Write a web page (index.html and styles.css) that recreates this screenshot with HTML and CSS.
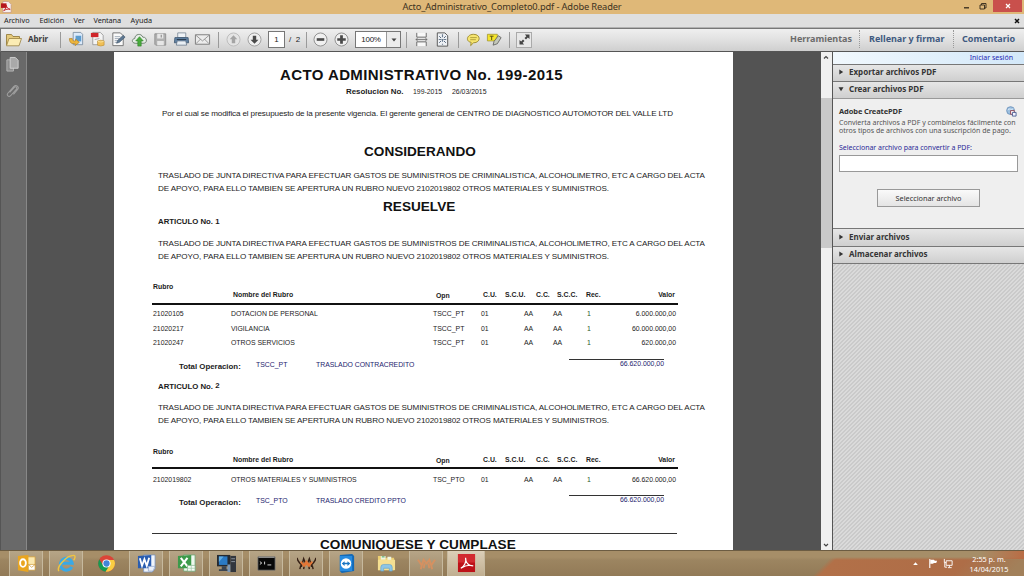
FILE: index.html
```html
<!DOCTYPE html>
<html lang="es">
<head>
<meta charset="utf-8">
<title>Acto_Administrativo_Completo0.pdf - Adobe Reader</title>
<link rel="stylesheet" href="styles.css">
</head>
<body>
<div class="desktop">
  <header class="titlebar">
    <svg class="app-icon" viewBox="0 0 12 12"><path d="M2 0h6l3 3v9H2z" fill="#f6eeee" stroke="#b98a7a" stroke-width=".6"/><path d="M0 2h6v5H0z" fill="#b5161c"/><path d="M3 10c2-2 3-4 2.600-6c1 3 2 4 4.400 4.500c-2-.5-5 0-7 1.500z" fill="none" stroke="#c21c22" stroke-width="1"/></svg>
    <span class="window-title">Acto_Administrativo_Completo0.pdf - Adobe Reader</span>
    <div class="window-buttons">
      <svg class="win-min" viewBox="0 0 8 8"><path d="M1 5.800h5" stroke="#33291a" stroke-width="1.300"/></svg>
      <svg class="win-max" viewBox="0 0 8 8"><path d="M1 3h4.500v4H1zM2.500 3V1.500H7V6H5.500" fill="none" stroke="#33291a" stroke-width=".9"/></svg>
      <span class="win-close"><svg viewBox="0 0 6 6"><path d="M1 1l4 4M5 1L1 5" stroke="#fff" stroke-width="1.200"/></svg></span>
    </div>
  </header>

  <nav class="menubar">
    <span class="m-archivo">Archivo</span><span class="m-edicion">Edición</span><span class="m-ver">Ver</span><span class="m-ventana">Ventana</span><span class="m-ayuda">Ayuda</span>
    <svg class="menu-close" viewBox="0 0 6 6"><path d="M1 1l4 4M5 1L1 5" stroke="#111" stroke-width="1.500"/></svg>
  </nav>

  <div class="toolbar">
    <svg class="folder" viewBox="0 0 18 16"><path d="M1.500 13V2.500h5l1.500 2h6.500v2" fill="#e6cb7c" stroke="#8d7331" stroke-width=".8"/><path d="M1.500 13.800L4 6.500h12.500L14 13.800z" fill="#fbecb4" stroke="#9b8140" stroke-width=".8"/></svg>
    <span class="open-label">Abrir</span>
    <span class="sep sep-12"></span>
    <span class="tool"><svg viewBox="0 0 18 18"><path d="M5.500 1.500h8l2 2v11h-10z" fill="#dceafa" stroke="#6e8296" stroke-width=".8"/><path d="M8 5h6v6H8z" fill="#5c9ccf"/><path d="M1.500 8c0 5 3 6 6 5v2.500L12 12 8 8.500v2C5 11 4.500 9.500 4.500 8z" fill="#eeb63d" stroke="#a87517" stroke-width=".6"/></svg></span>
    <span class="tool"><svg viewBox="0 0 18 18"><path d="M4 1.500h8l3 3v10H4z" fill="#f4f4f4" stroke="#8b8b8b" stroke-width=".8"/><path d="M2 2h8v4.500H2z" fill="#cf252a"/><path d="M6 9l5-1" stroke="#aaa"/><path d="M9 10.500q3.500-1.500 7 0v4.500q-3.500 1.800-7 0z" fill="#f0bf57" stroke="#b58a35" stroke-width=".6"/><path d="M9.500 11q3 1.300 6 0" fill="none" stroke="#fbe39b"/></svg></span>
    <span class="tool"><svg viewBox="0 0 18 18"><path d="M3 2h8l3 3v10.500H3z" fill="#fafafa" stroke="#666" stroke-width=".9"/><path d="M5 6h6M5 8h5M5 10h3M5 12h3" stroke="#8a97a7" stroke-width=".8"/><path d="M7 13l1-3 6-5.500 2 2L10 12z" fill="#5d7792" stroke="#3d4f63" stroke-width=".6"/></svg></span>
    <span class="tool"><svg viewBox="0 0 18 18"><path d="M4.500 13C0 12.500 1 8 4 8c0-5 7-6 8.500-1.500C17 6 18 13 13 13z" fill="#e9efe9" stroke="#6c7e70" stroke-width="1"/><path d="M9 6l4 4.500h-2.200V16H7.200v-5.500H5z" fill="#49ac3c" stroke="#2d7d25" stroke-width=".6"/></svg></span>
    <span class="tool"><svg viewBox="0 0 18 18"><path d="M3 3h11.500v12H4L3 14z" fill="#b0b0b0" stroke="#929292"/><path d="M5.500 3h6.500v5H5.500zM5.500 10.500h7V15h-7z" fill="#e6e6e6"/><path d="M9.800 4v3" stroke="#8d8d8d" stroke-width="1.200"/></svg></span>
    <span class="tool"><svg viewBox="0 0 18 18"><path d="M5 2h8.500v5H5z" fill="#eef2f6" stroke="#728190" stroke-width=".8"/><path d="M2 7h14l.5 5.500h-15z" fill="#6283a4" stroke="#38516c" stroke-width=".8"/><path d="M4.500 10.500h9l1 4.500h-11z" fill="#e9eff5" stroke="#647486" stroke-width=".8"/><path d="M4 9h10" stroke="#27384b"/></svg></span>
    <span class="tool"><svg viewBox="0 0 18 18"><path d="M1.500 4h15v10h-15z" fill="#ececec" stroke="#7b7b7b"/><path d="M2 4.500l7 6 7-6M2 13.500l5-5M16 13.500l-5-5" fill="none" stroke="#8b8b8b" stroke-width=".9"/></svg></span>
    <span class="sep sep-10"></span>
    <span class="tool"><svg viewBox="0 0 18 18"><circle cx="9" cy="9" r="6.900" fill="#e4e4e4" stroke="#bbb"/><path d="M9 4.500l4 4.200h-2.200V13H7.200V8.700H5z" fill="#a4a4a4"/></svg></span>
    <span class="tool"><svg viewBox="0 0 18 18"><circle cx="9" cy="9" r="6.900" fill="#f0f0f0" stroke="#9d9d9d"/><path d="M9 13.500L4.800 9.300h2.400V5h3.600v4.300h2.400z" fill="#4a4a4a"/></svg></span>
    <span class="page-box">1</span><span class="page-total">/&nbsp; 2</span>
    <span class="sep sep-8"></span>
    <span class="tool"><svg viewBox="0 0 18 18"><circle cx="9" cy="9" r="6.900" fill="#f0f0f0" stroke="#8d8d8d"/><path d="M5 9h8" stroke="#4a4a4a" stroke-width="2.800"/></svg></span>
    <span class="tool"><svg viewBox="0 0 18 18"><circle cx="9" cy="9" r="6.900" fill="#f0f0f0" stroke="#8d8d8d"/><path d="M4.500 9h9M9 4.500v9" stroke="#4a4a4a" stroke-width="2.900"/></svg></span>
    <span class="zoom-box"><span class="zoom-value">100%</span><span class="zoom-arrow"><svg viewBox="0 0 6 4"><path d="M.5.5h5L3 3.500z" fill="#444"/></svg></span></span>
    <span class="sep sep-10"></span>
    <span class="tool"><svg viewBox="0 0 18 18"><path d="M4 2v4.500h10V2M4 16v-4.500h10V16" fill="#f8f8f8" stroke="#666" stroke-width="1"/><path d="M3 9h12M5 7.500L3 9l2 1.500M13 7.500L15 9l-2 1.500" fill="none" stroke="#666" stroke-width=".8"/></svg></span>
    <span class="tool"><svg viewBox="0 0 18 18"><path d="M3.500 2h8l3 3v11h-11z" fill="#eef1f5" stroke="#555"/><path d="M9 3.500v11M5 9h8" stroke="#6b7c90" stroke-width="1.200" stroke-dasharray="3 2"/><path d="M5.500 5.500l2 2M12.500 5.500l-2 2M5.500 12.500l2-2M12.500 12.500l-2-2" stroke="#4e6078"/></svg></span>
    <span class="sep sep-10"></span>
    <span class="tool"><svg viewBox="0 0 18 18"><path d="M9 3.500c8 0 8 9 0 9L6 15.500 6.500 12C0 11 2 3.500 9 3.500z" fill="#f6e56f" stroke="#958326" stroke-width=".9"/><path d="M5.500 7h7M5.500 9.200h6" stroke="#a1902f" stroke-width=".8"/></svg></span>
    <span class="tool"><svg viewBox="0 0 18 18"><path d="M1.500 3.500H12v7H1.500z" fill="#f5e52b" stroke="#a0922c" stroke-width=".8"/><path d="M4 5.500h4M6 5.500v4" stroke="#554b12"/><path d="M7.500 15l1-4 4.500-6 3 2-4 6.500z" fill="#c4c8bb" stroke="#555" stroke-width=".8"/></svg></span>
    <span class="sep sep-8"></span>
    <span class="tool expand"><svg viewBox="0 0 18 18"><path d="M9.500 3H15v5.500L13 6.600 10.800 9 9 7.200 11.300 5zM8.500 15H3V9.500L5 11.400 7.200 9 9 10.800 6.700 13z" fill="#444"/></svg></span>
    <div class="tabs"><span class="tab-tools">Herramientas</span><span class="tab-fill">Rellenar y firmar</span><span class="tab-comment">Comentario</span></div>
  </div>

  <main class="workspace">
    <aside class="rail">
      <svg viewBox="0 0 16 18"><path d="M2 4h7v12H2z" fill="#8d8d8d" stroke="#b4b4b4"/><path d="M5.500 1.500H11l3 3V13H5.500z" fill="#a9a9a9" stroke="#d0d0d0"/></svg>
      <svg class="clip" viewBox="0 0 16 18"><path d="M5 10l5-5.500c1.500-1.500 3.500.5 2.200 2L6 13.500c-2 2-4.800-.5-3-2.600L9.500 3.500c2.500-2.500 6 1 4 3.300L9 12" fill="none" stroke="#a0a0a0" stroke-width="1.100"/></svg>
    </aside>
    <section class="viewer">
      <article class="page">
        <h1>ACTO ADMINISTRATIVO No. 199-2015</h1>
        <p class="resolution"><b>Resolucion No.</b><span>199-2015</span><span>26/03/2015</span></p>
        <p class="intro">Por el cual se modifica el presupuesto de la presente vigencia. El gerente general de <span>CENTRO DE DIAGNOSTICO AUTOMOTOR DEL VALLE LTD</span></p>
        <h2 class="considering">CONSIDERANDO</h2>
        <p class="clause clause-first">TRASLADO DE JUNTA DIRECTIVA PARA EFECTUAR GASTOS DE SUMINISTROS DE CRIMINALISTICA, ALCOHOLIMETRO, ETC A CARGO DEL ACTA<br>DE APOYO, PARA ELLO TAMBIEN SE APERTURA UN RUBRO NUEVO 2102019802 OTROS MATERIALES Y SUMINISTROS.</p>
        <h2 class="resolves">RESUELVE</h2>
        <h3 class="article-one">ARTICULO No. <span>1</span></h3>
        <p class="clause">TRASLADO DE JUNTA DIRECTIVA PARA EFECTUAR GASTOS DE SUMINISTROS DE CRIMINALISTICA, ALCOHOLIMETRO, ETC A CARGO DEL ACTA<br>DE APOYO, PARA ELLO TAMBIEN SE APERTURA UN RUBRO NUEVO 2102019802 OTROS MATERIALES Y SUMINISTROS.</p>
        <div class="table">
          <div class="thead"><span class="th-rubro">Rubro</span><span>Nombre del Rubro</span><span class="th-opn">Opn</span><span>C.U.</span><span>S.C.U.</span><span>C.C.</span><span>S.C.C.</span><span>Rec.</span><span class="num">Valor</span></div>
          <div class="row"><span>21020105</span><span>DOTACION DE PERSONAL</span><span>TSCC_PT</span><span>01</span><span>AA</span><span>AA</span><span class="rec">1</span><span class="num">6.000.000,00</span></div>
          <div class="row row-gap"><span>21020217</span><span>VIGILANCIA</span><span>TSCC_PT</span><span>01</span><span>AA</span><span>AA</span><span class="rec">1</span><span class="num">60.000.000,00</span></div>
          <div class="row row-tight"><span>21020247</span><span>OTROS SERVICIOS</span><span>TSCC_PT</span><span>01</span><span>AA</span><span>AA</span><span class="rec">1</span><span class="num">620.000,00</span></div>
          <div class="total"><b>Total Operacion:</b><span class="code">TSCC_PT</span><span class="desc">TRASLADO CONTRACREDITO</span><span class="sum">66.620.000,00</span></div>
        </div>
        <h3 class="article-two">ARTICULO No. <span>2</span></h3>
        <p class="clause clause-last">TRASLADO DE JUNTA DIRECTIVA PARA EFECTUAR GASTOS DE SUMINISTROS DE CRIMINALISTICA, ALCOHOLIMETRO, ETC A CARGO DEL ACTA<br>DE APOYO, PARA ELLO TAMBIEN SE APERTURA UN RUBRO NUEVO 2102019802 OTROS MATERIALES Y SUMINISTROS.</p>
        <div class="table">
          <div class="thead"><span class="th-rubro">Rubro</span><span>Nombre del Rubro</span><span class="th-opn">Opn</span><span>C.U.</span><span>S.C.U.</span><span>C.C.</span><span>S.C.C.</span><span>Rec.</span><span class="num">Valor</span></div>
          <div class="row row-single"><span>2102019802</span><span>OTROS MATERIALES Y SUMINISTROS</span><span>TSC_PTO</span><span>01</span><span>AA</span><span>AA</span><span class="rec">1</span><span class="num">66.620.000,00</span></div>
          <div class="total total-last"><b>Total Operacion:</b><span class="code">TSC_PTO</span><span class="desc">TRASLADO CREDITO PPTO</span><span class="sum">66.620.000,00</span></div>
        </div>
        <h2 class="closing">COMUNIQUESE Y CUMPLASE</h2>
      </article>
    </section>
    <div class="scrollbar">
      <svg viewBox="0 0 10 10"><path d="M3 6.500L5 4.500l2 2" fill="none" stroke="#444" stroke-width="1.200"/></svg>
      <span class="thumb"></span>
      <svg viewBox="0 0 10 10"><path d="M3 4l2 2 2-2" fill="none" stroke="#444" stroke-width="1.200"/></svg>
    </div>
    <aside class="panel">
      <div class="signin">Iniciar sesión</div>
      <div class="section"><svg viewBox="0 0 6 6"><path d="M1.300.5L5.200 3 1.300 5.500z" fill="#333"/></svg><span>Exportar archivos PDF</span></div>
      <div class="section"><svg viewBox="0 0 6 6"><path d="M.5 1.300h5L3 5.200z" fill="#333"/></svg><span>Crear archivos PDF</span></div>
      <div class="create">
        <div class="create-head"><b>Adobe CreatePDF</b><svg viewBox="0 0 12 12"><circle cx="5" cy="5" r="4.300" fill="#9cbfdf" stroke="#5f86b3" stroke-width=".8"/><path d="M2 4c2-2 4 1 6-1" stroke="#e3f0fb" fill="none"/><path d="M5 5h4v4H5z" fill="#fff" stroke="#8b3443" stroke-width=".9"/><path d="M7 7h4v4H7z" fill="#f4f4ff" stroke="#39508c" stroke-width=".9"/></svg></div>
        <p>Convierta archivos a PDF y combínelos fácilmente con<br>otros tipos de archivos con una suscripción de pago.</p>
        <label>Seleccionar archivo para convertir a PDF:</label>
        <div class="file-input"></div>
        <button type="button">Seleccionar archivo</button>
      </div>
      <div class="section section-wide"><svg viewBox="0 0 6 6"><path d="M1.300.5L5.200 3 1.300 5.500z" fill="#333"/></svg><span>Enviar archivos</span></div>
      <div class="section section-last"><svg viewBox="0 0 6 6"><path d="M1.300.5L5.200 3 1.300 5.500z" fill="#333"/></svg><span>Almacenar archivos</span></div>
      <div class="hatch"></div>
    </aside>
  </main>

  <footer class="taskbar">
    <span class="task open"><svg viewBox="0 0 20 20"><path d="M8 3h11v13H8z" fill="#fbe9b0" stroke="#d9a23a" stroke-width=".8"/><path d="M1 2l11-1v18L1 17z" fill="#e9a520"/><ellipse cx="6.300" cy="9.500" rx="3" ry="4" fill="none" stroke="#fff" stroke-width="2"/><path d="M12 11h7v6h-7z" fill="#fff" stroke="#cf9b37" stroke-width=".7"/><path d="M12 11l3.500 3 3.500-3" fill="none" stroke="#cf9b37" stroke-width=".8"/></svg></span>
    <span class="task open"><svg viewBox="0 0 20 20"><path d="M15.500 13.500A6.200 6.200 0 1 1 16 9.800H5" fill="none" stroke="#39a9e6" stroke-width="3.200"/><path d="M2 18C-1 14 10 1 18 1.500c2 .5.500 4-.5 5" fill="none" stroke="#f0c541" stroke-width="1.500"/></svg></span>
    <span class="task"><svg viewBox="0 0 20 20"><circle cx="10" cy="10" r="8.800" fill="#db4437"/><path d="M2.400 5.600A8.800 8.800 0 0 0 9 18.700L13.500 12 6.500 12z" fill="#159b52"/><path d="M18 6.200A8.800 8.800 0 0 1 9 18.700L13.900 11 12 6.200z" fill="#f9cd42"/><circle cx="10" cy="10" r="4.300" fill="#fff"/><circle cx="10" cy="10" r="3.300" fill="#4285d8"/></svg></span>
    <span class="task open"><svg viewBox="0 0 20 20"><path d="M7 1h12v14l-3 4H7z" fill="#f1f5fb" stroke="#7a94c0" stroke-width=".8"/><path d="M1 2l14-1v14L1 15z" fill="#2a5db0"/><path d="M3 4.500l2.300 8 2.500-7 2.500 7 2.500-8.500" fill="none" stroke="#fff" stroke-width="1.900"/><path d="M12 13h7l-2 5h-5z" fill="#e9eef7" stroke="#8aa0c8" stroke-width=".7"/></svg></span>
    <span class="task open"><svg viewBox="0 0 20 20"><path d="M7 1h12v17H7z" fill="#eff8ef" stroke="#68a771" stroke-width=".8"/><path d="M1 2l14-1v14L1 15z" fill="#3d9a4a"/><path d="M4 4l7 9M11 4l-7 9" stroke="#fff" stroke-width="2.200"/><path d="M11 12h8v6h-8z" fill="#f7fbf7" stroke="#7fb187" stroke-width=".7"/><path d="M11 15h8M15 12v6" stroke="#9cc7a2" stroke-width=".7"/></svg></span>
    <span class="task open"><svg viewBox="0 0 20 20"><path d="M0 1h14v12H0z" fill="#252a31"/><path d="M2 2.500h9v9H2z" fill="#2b7ac4"/><path d="M2 2.500h5l-5 6z" fill="#61abdf"/><path d="M5 13h5v3H5zM2 16h11v2H2z" fill="#3b4450"/><path d="M14 2h6v17h-6z" fill="#32363d"/><path d="M15 5h4M15 8h4" stroke="#8c959e"/><path d="M11 11h3v8h-3z" fill="#7d98b5"/></svg></span>
    <span class="task open"><svg viewBox="0 0 20 20"><path d="M1 3h18v14H1z" fill="#080808" stroke="#717171" stroke-width=".8"/><path d="M1.500 3.500h17" stroke="#aaa"/><path d="M3 8l2 1.500L3 11M8 8v3M11 11.500h4" fill="none" stroke="#ddd" stroke-width="1"/></svg></span>
    <span class="task open"><svg viewBox="0 0 20 20"><path d="M0 4c1 5 3 5 5 8l2-7 2 5h2l2-5 2 7c2-3 4-3 5-8M4 12l-1 4M8 10l-1 6M12 10l1 6M16 12l1 4" fill="none" stroke="#362015" stroke-width="1.500"/><path d="M4 8l3 4 3-4 3 4 3-4M7 13l3-3 3 3" fill="none" stroke="#e37636" stroke-width="2"/></svg></span>
    <span class="task open"><svg viewBox="0 0 20 20"><path d="M3 1l13-1 2 2v16l-13 2-2-2z" fill="#1268b6"/><path d="M3 2h13v16H3z" fill="#278be0"/><circle cx="9.500" cy="10" r="5.500" fill="#fff"/><path d="M5 10l3-2.500v1.700h3V7.500l3 2.500-3 2.500v-1.700H8v1.700z" fill="#1874c2"/></svg></span>
    <span class="task"><svg viewBox="0 0 20 20"><path d="M1 2h6l1 2h10v13H1z" fill="#edcf71"/><path d="M4 2h5v4H4zM11 3h4v4h-4z" fill="#eef5e2"/><path d="M5 3h3" stroke="#3c9b54"/><path d="M1 6h18v11H1z" fill="#f5df91"/><path d="M4 18v-4q0-3 3-3h6q3 0 3 3v4h-3v-3H7v3z" fill="#8dc5e5" stroke="#64a5cc" stroke-width=".7"/></svg></span>
    <span class="task open"><svg class="dim" viewBox="0 0 20 20"><path d="M1 6l4 6 2-6 3 4 3-4 2 6 4-6M5 12l-1 4M8 10l-1 5M12 10l1 5M15 12l1 4" fill="none" stroke="#e0905c" stroke-width="2"/></svg></span>
    <span class="task open active"><svg viewBox="0 0 20 20"><path d="M1 0h18v19H1z" fill="#bd1118"/><path d="M1 0h18v9H1z" fill="#d22a2f"/><path d="M4 15c4-2 6-7 5-11c0 6 4 8.500 8 8.500c-4-1.500-9 0-13 2.500z" fill="none" stroke="#fff" stroke-width="1.300"/></svg></span>
    <div class="tray">
      <svg class="t-up" viewBox="0 0 6 6"><path d="M1 4.200h4L3 2z" fill="#fff"/></svg>
      <svg class="t-flag" viewBox="0 0 10 12"><path d="M1.500 1v10" stroke="#fff" stroke-width="1.200"/><path d="M2 2h4l1 1h2.500L8.500 5.500H6l-1 .8H2z" fill="#fff"/></svg>
      <svg class="t-net" viewBox="0 0 10 12"><path d="M3 3h6.500v5H3zM5 10.500h4M6.500 8v2M1 1v4h2M1.500 5v5H4" fill="none" stroke="#fff" stroke-width="1"/></svg>
      <div class="clock"><span>2:55 p. m.</span><span>14/04/2015</span></div>
    </div>
  </footer>
</div>
</body>
</html>
```
FILE: styles.css
```css
* { box-sizing: border-box; }
body { margin: 0; overflow: hidden; }
.desktop { width: 1024px; height: 576px; display: flex; flex-direction: column; overflow: hidden; font-family: "Noto Sans", "Open Sans", sans-serif; color: #222; }
svg { display: block; flex: none; }
h1, h2, h3, p { margin: 0; }
span, b, label { white-space: nowrap; }

.titlebar { height: 14px; flex: none; display: grid; grid-template-columns: 100px 1fr 100px; align-items: start; background: #dfb878; }
.app-icon { width: 11px; height: 12px; margin: 1px 0 0 1px; }
.window-title { justify-self: center; font-size: 9.300px; line-height: 14px; letter-spacing: -.14px; color: #3d321f; }
.window-buttons { display: flex; justify-content: flex-end; padding-right: 2px; }
.win-min, .win-max { width: 8px; height: 8px; margin-top: 2px; }
.win-min { margin-right: 8px; }
.win-max { margin-right: 6px; }
.win-close { width: 29px; height: 12px; background: #c9504c; display: flex; align-items: center; justify-content: center; }
.win-close svg { width: 6px; height: 6px; }

.menubar { height: 14px; flex: none; display: flex; align-items: center; padding-left: 4px; background: #dfdfdf; border-bottom: 1px solid #b2b2b2; font-size: 7.300px; line-height: 13px; }
.m-archivo { width: 35.500px; }
.m-edicion { width: 34px; }
.m-ver { width: 20px; }
.m-ventana { width: 37px; letter-spacing: -.1px; }
.menu-close { width: 6px; height: 6px; margin: 0 4px 0 auto; }

.toolbar { height: 24px; flex: none; display: flex; align-items: center; padding-left: 5px; background: linear-gradient(#efefef, #e2e2e2 45%, #cfcfcf); border-top: 1px solid #777; border-bottom: 1px solid #555; border-left: 1px solid #777; }
.folder { width: 18px; height: 16px; margin-left: -1px; }
.open-label { width: 31px; padding-left: 5px; font-size: 8px; font-weight: 700; color: #3b3b3b; line-height: 16px; padding-bottom: 2px; }
.sep { height: 16px; display: flex; justify-content: center; flex: none; }
.sep::before { content: ""; width: 1px; height: 16px; background: #9a9a9a; }
.sep-12 { width: 12px; }
.sep-10 { width: 10px; }
.sep-8 { width: 8px; }
.tool { width: 21px; height: 18px; display: flex; align-items: center; justify-content: center; flex: none; margin-bottom: 1px; }
.tool svg { width: 17px; height: 17px; }
.expand { width: 16px; height: 16px; margin-left: 3px; border: 1px solid #aaa; background: #e8e8e8; }
.expand svg { width: 15px; height: 15px; }
.page-box { width: 17px; height: 17px; margin: 0 0 1px 3px; border: 1px solid #777; background: #fff; font: 8px/15px "Liberation Sans", sans-serif; text-align: center; }
.page-total { width: 17px; padding-left: 4px; font: 8px/14px "Liberation Sans", sans-serif; }
.zoom-box { width: 46px; height: 17px; margin: 0 0 1px 3px; display: flex; border: 1px solid #777; background: #fff; font: 8px/15px "Liberation Sans", sans-serif; }
.zoom-value { width: 31px; text-align: center; border-right: 1px solid #999; letter-spacing: -.3px; }
.zoom-arrow { flex: 1; display: flex; align-items: center; justify-content: center; background: #ececec; }
.zoom-arrow svg { width: 6px; height: 4px; }
.tabs { margin: 0 0 2px auto; display: flex; align-items: center; font-size: 9px; font-weight: 700; color: #3f5a80; line-height: 18px; }
.tab-tools { color: #6b6b6b; width: 70px; border-right: 1px dotted #999; }
.tab-fill { width: 94px; padding-left: 9px; border-right: 1px dotted #999; }
.tab-comment { width: 70px; padding-left: 8px; }

.workspace { flex: 1; min-height: 0; display: flex; background: #535353; }
.rail { width: 27px; background: #696969; border-right: 1px solid #888; border-left: 1px solid #555; padding: 4px 0 0 4px; }
.rail svg { width: 15px; height: 17px; }
.rail .clip { margin-top: 10px; }
.viewer { width: 794px; padding-left: 87px; overflow: hidden; }

.page { width: 619px; height: 498px; overflow: hidden; background: #fff; padding: 13px 0 0 38px; font-family: "Liberation Sans", Arial, sans-serif; color: #1b1b1b; }
h1 { font-size: 15px; line-height: 20px; letter-spacing: .41px; margin-left: 128px; color: #111; white-space: nowrap; }
h2 { font-size: 13.600px; line-height: 22px; color: #111; }
h3 { font-size: 7.800px; line-height: 8px; padding-left: 6px; }
.resolution { display: flex; padding-left: 194px; line-height: 14px; font-size: 6.900px; }
.resolution b { font-size: 7.900px; width: 67px; }
.resolution span { width: 39px; }
.intro { margin-top: 8px; padding-left: 10px; font-size: 8.100px; letter-spacing: -.135px; line-height: 14px; white-space: nowrap; }
.considering { margin: 20px 0 0 212px; }
.clause { margin-top: 13px; padding-left: 6px; font-size: 8.100px; letter-spacing: -.113px; line-height: 12.500px; white-space: nowrap; }
.clause-first { margin-top: 6px; line-height: 13px; }
.clause-last { margin-top: 12px; }
.resolves { margin: 1px 0 0 231px; }
.article-one { line-height: 7px; }
.article-two { margin-top: 9px; line-height: 9px; }
.article-two span { position: relative; top: -1px; }

.table { width: 526px; margin-top: 18px; font-size: 6.900px; }
.thead { display: grid; grid-template-columns: 80px 203px 47px 22px 31px 21px 29px 28px 1fr; height: 24px; padding: 8px 3px 0 1px; border-bottom: 2px solid #111; font-weight: 700; line-height: 12px; }
.th-rubro { margin-top: -8px; }
.th-opn { padding-top: 1px; }
.num { text-align: right; }
.row { display: grid; grid-template-columns: 78px 202px 48px 43px 29px 34px 30px 1fr; margin-top: 2px; padding: 0 2px 0 1px; line-height: 14px; }
.row-gap { margin-top: 1px; }
.row-tight { margin-top: 0; line-height: 13px; }
.row-single { margin-top: 4px; }
.rec { color: #2c5a2c; }
.total { display: flex; height: 14px; margin-top: 10px; padding-left: 27px; color: #24246e; }
.total b { width: 77px; font-size: 7.850px; line-height: 15px; color: #1b1b1b; }
.code { width: 60px; line-height: 11px; }
.desc { width: 253px; line-height: 11px; letter-spacing: -.03px; }
.sum { width: 95px; height: 10px; border-top: 1px solid #333; line-height: 8px; text-align: right; }
.clause-last { margin-top: 11px; }
.clause-last + .table { margin-top: 19px; }
.clause-last + .table .thead { height: 23px; padding-top: 8px; }
.total-last { margin-top: 8px; }
.closing { width: 525px; margin-top: 24px; padding: 5px 0 0 168px; border-top: 1px solid #333; line-height: 11px; letter-spacing: .03px; white-space: nowrap; }

.scrollbar { width: 11px; background: #f0f0f0; display: flex; flex-direction: column; }
.scrollbar svg { width: 10px; height: 10px; }
.thumb { height: 150px; margin: 36px 0 auto; background: #c9c9c9; }
.panel { flex: 1; display: flex; flex-direction: column; border-left: 1px solid #555; background: #efefef; }
.signin { height: 12px; padding-right: 11px; text-align: right; font-size: 7px; line-height: 12px; color: #2626b4; background: linear-gradient(90deg, #f1f8fd, #d3e8f9); }
.section { height: 17px; flex: none; display: flex; align-items: center; padding: 0 0 2px 5px; border-top: 1px solid #777; background: linear-gradient(#e6e6e6, #cfcfcf); font-size: 8px; font-weight: 700; color: #353535; line-height: 14px; }
.section svg { width: 6px; height: 6px; margin-right: 5px; }
.section-wide { height: 18px; }
.section-last { border-bottom: 1px solid #777; height: 18px; }
.create { height: 130px; padding: 7px 6px 0 6px; border-top: 1px solid #999; font-size: 7px; line-height: 8px; color: #555; }
.create p { margin-top: 2px; }
.create-head { display: flex; justify-content: space-between; line-height: 11px; font-size: 7.500px; letter-spacing: -.12px; color: #333; }
.create-head svg { width: 11px; height: 11px; margin-right: 1px; }
.create label { display: block; margin-top: 9px; letter-spacing: -.02px; color: #2a2a98; }
.file-input { height: 17px; margin-top: 3px; border: 1px solid #999; background: #fff; }
.create button { display: block; width: 103px; height: 18px; margin: 17px 0 0 38px; padding: 0; border: 1px solid #999; background: linear-gradient(#fafafa, #e4e4e4); font: 7.300px/16px "Noto Sans", sans-serif; color: #333; }
.hatch { flex: 1; background: repeating-linear-gradient(135deg, #dadada 0 1.4142px, #cacaca 1.4142px 2.8284px); }

.taskbar { height: 26px; flex: none; display: flex; align-items: stretch; padding-left: 6px; background: linear-gradient(90deg, transparent 980px, rgba(190, 100, 60, .8)) 0 0 / 100% 8px no-repeat, linear-gradient(#a68e68 6px, transparent 9px), linear-gradient(135deg, transparent 592px, #b27048 597px, #ae6d47 690px, #a2805a 730px), linear-gradient(#a28b66, #927a57); border-top: 1px solid #6c5c42; }
.task { width: 40px; display: flex; align-items: center; justify-content: center; }
.open { background: linear-gradient(#b6a587, #a08a69); border: solid #c6b99e; border-width: 0 1px; width: 34px; margin: 0 3px; }
.active { background: linear-gradient(#dccfb8, #c0ae90); width: 38px; margin: 0 1px; }
.task svg { width: 19px; height: 19px; }
.dim { opacity: .8; }
.tray { margin-left: auto; display: flex; align-items: center; color: #fff; }
.t-up { width: 7px; height: 7px; margin-right: 9px; }
.t-flag { width: 10px; height: 11px; margin-right: 5px; }
.t-net { width: 10px; height: 11px; margin-right: 11px; }
.clock { width: 50px; display: flex; flex-direction: column; align-items: center; margin-right: 10px; font-size: 7.300px; line-height: 10px; }
```
